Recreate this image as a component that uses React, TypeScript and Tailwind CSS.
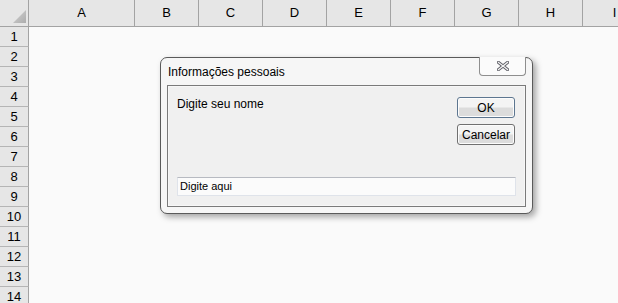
import React from "react";

const cols = [
  { name: "A", w: "w-[106px]" },
  { name: "B", w: "w-[64px]" },
  { name: "C", w: "w-[64px]" },
  { name: "D", w: "w-[64px]" },
  { name: "E", w: "w-[64px]" },
  { name: "F", w: "w-[64px]" },
  { name: "G", w: "w-[64px]" },
  { name: "H", w: "w-[64px]" },
  { name: "I", w: "w-[64px]" },
];

const rows = Array.from({ length: 14 }, (_, i) => i + 1);

function CloseGlyph() {
  return (
    <svg width="12" height="10" viewBox="0 0 12 10">
      <path d="M1.5 1.5 L10.5 8.5 M10.5 1.5 L1.5 8.5" stroke="#5e5e66" strokeWidth="3.2" strokeLinecap="square" fill="none" />
      <path d="M1.5 1.5 L10.5 8.5 M10.5 1.5 L1.5 8.5" stroke="#f4f4f4" strokeWidth="1.3" strokeLinecap="square" fill="none" />
    </svg>
  );
}

function WinButton({ label, primary }: { label: string; primary?: boolean }) {
  return (
    <div
      className={`flex h-[21px] w-[58px] items-center justify-center rounded-[3px] border bg-gradient-to-b from-[#f4f4f4] from-45% to-[#dcdcdc] to-55% text-[12px] leading-none text-black shadow-[inset_0_0_0_1px_#fcfcfc] ${
        primary ? "border-[#5d7690]" : "border-[#707070]"
      }`}
    >
      {label}
    </div>
  );
}

export default function App() {
  return (
    <div className="relative h-[303px] w-[618px] overflow-hidden bg-[#fafafa] font-['Liberation_Sans',Arial,sans-serif] text-black">
      {/* column headers */}
      <div className="flex h-[27px] border-b border-[#a3a3a3] bg-[#e6e6e6]">
        <div className="relative w-[29px] shrink-0 border-r border-[#a3a3a3]">
          <svg className="absolute left-0 top-0" width="28" height="26" viewBox="0 0 28 26">
            <defs>
              <linearGradient id="tri" x1="0" y1="0" x2="1" y2="1">
                <stop offset="0" stopColor="#d4d4d4" />
                <stop offset="1" stopColor="#acacac" />
              </linearGradient>
            </defs>
            <polygon points="26,10 26,23 13,23" fill="url(#tri)" />
          </svg>
        </div>
        {cols.map((c) => (
          <div
            key={c.name}
            className={`${c.w} flex shrink-0 items-center justify-center border-r border-[#a3a3a3] text-[13px]`}
          >
            {c.name}
          </div>
        ))}
      </div>

      {/* rows */}
      <div className="flex flex-col">
        {rows.map((r) => (
          <div key={r} className="flex h-[20px]">
            <div className="flex w-[29px] shrink-0 items-center justify-center border-b border-r border-b-[#b5b5b5] border-r-[#a3a3a3] bg-[#e6e6e6] text-[13px]">
              {r}
            </div>
            <div className="flex-1" />
          </div>
        ))}
      </div>

      {/* InputBox dialog */}
      <div className="absolute left-[160px] top-[57px] flex h-[157px] w-[373px] flex-col rounded-[7px] border border-[#5a5a5a] bg-[#f6f6f6] shadow-[3px_3px_6px_rgba(0,0,0,0.35)]">
        <div className="relative flex h-[27px] shrink-0 items-center pl-[7px] text-[12px]">
          Informações pessoais
          <div className="absolute right-[6px] top-[-1px] flex h-[19px] w-[47px] items-center justify-center rounded-b-[4px] border border-t-0 border-[#8e8e8e] bg-[#fbfbfb]">
            <CloseGlyph />
          </div>
        </div>
        <div className="mx-[6px] mb-[6px] flex flex-1 flex-col border border-[#7a7a7a] bg-[#f0f0f0] pb-[10px] pl-[9px] pr-[9px] pt-[11px] shadow-[inset_0_0_0_1px_#f7f7f7]">
          <div className="flex justify-between">
            <div className="-mt-[2px] text-[12px]">Digite seu nome</div>
            <div className="flex flex-col gap-[6px] pr-[1px]">
              <WinButton label="OK" primary />
              <WinButton label="Cancelar" />
            </div>
          </div>
          <div className="mt-auto flex h-[19px] items-center border border-[#dfe3ea] border-t-[#b7bac1] bg-[#fbfbfb] pl-[2px] text-[11px]">
            Digite aqui
          </div>
        </div>
      </div>
    </div>
  );
}
